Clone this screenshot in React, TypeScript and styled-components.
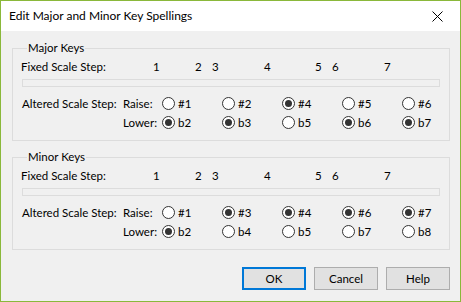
import React from 'react';
import styled, { createGlobalStyle } from 'styled-components';

const GlobalStyle = createGlobalStyle`
  html, body {
    margin: 0;
    padding: 0;
    background: #ffffff;
  }
  body {
    font-family: Lato, 'Noto Sans', 'Liberation Sans', sans-serif;
    font-size: 11.5px;
    color: #000000;
  }
`;

const Window = styled.div`
  width: 461px;
  height: 302px;
  box-sizing: border-box;
  border: 1px solid #8ab83a;
  display: flex;
  flex-direction: column;
  background: #f0f0f0;
`;

const TitleBar = styled.div`
  height: 30px;
  background: #ffffff;
  display: flex;
  align-items: center;
  justify-content: space-between;
  padding: 0 0 0 8px;
  flex-shrink: 0;
`;

const Title = styled.div`
  font-size: 12px;
  color: #000000;
  padding-bottom: 1px;
`;

const CloseButton = styled.div`
  width: 46px;
  height: 30px;
  display: flex;
  align-items: center;
  justify-content: center;
`;

const Client = styled.div`
  flex: 1;
  padding: 9px 10px 0 11px;
  display: flex;
  flex-direction: column;
`;

const GroupBox = styled.fieldset<{ $gap?: number }>`
  margin: 0 0 ${({ $gap }) => $gap ?? 0}px 0;
  padding: 0 8px 8px 8px;
  border: 1px solid #dcdcdc;
  min-width: 0;
`;

const Legend = styled.legend`
  padding: 0 1px;
  margin-left: 6px;
  line-height: 16px;
`;

const FixedRow = styled.div`
  position: relative;
  height: 16px;
  line-height: 16px;
  margin-top: 3px;
  white-space: nowrap;
`;

const StepNumber = styled.span`
  position: absolute;
  top: 0;
`;

const Track = styled.div`
  height: 8px;
  box-sizing: border-box;
  margin: 4px 1px 0 1px;
  border: 1px solid #dcdcdc;
  background: #f0f0f0;
`;

const AlteredGrid = styled.div`
  display: grid;
  grid-template-columns: 101px 39px repeat(5, 60px);
  grid-auto-rows: 19px;
  margin: 7px 0 0 1px;
  align-items: center;
`;

const RowLabel = styled.span`
  line-height: 16px;
  white-space: nowrap;
`;

const RadioItem = styled.label`
  display: flex;
  align-items: center;
  gap: 3px;
  line-height: 16px;
`;

const RadioCircle = styled.span<{ $checked: boolean }>`
  width: 13px;
  height: 13px;
  box-sizing: border-box;
  border: 1px solid #333333;
  border-radius: 50%;
  background: #ffffff;
  display: flex;
  align-items: center;
  justify-content: center;

  &::after {
    content: '';
    width: 7px;
    height: 7px;
    border-radius: 50%;
    background: ${({ $checked }) => ($checked ? '#333333' : 'transparent')};
  }
`;

const ButtonRow = styled.div`
  display: flex;
  justify-content: flex-end;
  gap: 8px;
  margin-top: 17px;
`;

const Button = styled.button<{ $focused?: boolean }>`
  width: 64px;
  height: 23px;
  box-sizing: border-box;
  font-family: inherit;
  font-size: 11.5px;
  color: #000000;
  background: #e1e1e1;
  border: ${({ $focused }) => ($focused ? '2px solid #0078d7' : '1px solid #adadad')};
  padding: 0;
  margin: 0;
`;

const stepOffsets = [132, 174, 191, 243, 294, 311, 363];

interface RadioOption {
  label: string;
  checked: boolean;
}

interface KeyGroup {
  title: string;
  raise: RadioOption[];
  lower: RadioOption[];
}

const groups: KeyGroup[] = [
  {
    title: 'Major Keys',
    raise: [
      { label: '#1', checked: false },
      { label: '#2', checked: false },
      { label: '#4', checked: true },
      { label: '#5', checked: false },
      { label: '#6', checked: false },
    ],
    lower: [
      { label: 'b2', checked: true },
      { label: 'b3', checked: true },
      { label: 'b5', checked: false },
      { label: 'b6', checked: true },
      { label: 'b7', checked: true },
    ],
  },
  {
    title: 'Minor Keys',
    raise: [
      { label: '#1', checked: false },
      { label: '#3', checked: true },
      { label: '#4', checked: true },
      { label: '#6', checked: true },
      { label: '#7', checked: true },
    ],
    lower: [
      { label: 'b2', checked: true },
      { label: 'b4', checked: false },
      { label: 'b5', checked: false },
      { label: 'b7', checked: false },
      { label: 'b8', checked: false },
    ],
  },
];

const Radio: React.FC<RadioOption> = ({ label, checked }) => (
  <RadioItem>
    <RadioCircle $checked={checked} />
    <span>{label}</span>
  </RadioItem>
);

const CloseIcon = () => (
  <svg width="11" height="11" viewBox="0 0 11 11">
    <path d="M0.5 0.5 L10.5 10.5 M10.5 0.5 L0.5 10.5" stroke="#000" strokeWidth="1" fill="none" />
  </svg>
);

const App: React.FC = () => {
  return (
    <>
      <GlobalStyle />
      <Window>
        <TitleBar>
          <Title>Edit Major and Minor Key Spellings</Title>
          <CloseButton>
            <CloseIcon />
          </CloseButton>
        </TitleBar>
        <Client>
          {groups.map((group, i) => (
            <GroupBox key={group.title} $gap={i === 0 ? 8 : 0}>
              <Legend>{group.title}</Legend>
              <FixedRow>
                <span>Fixed Scale Step:</span>
                {stepOffsets.map((left, n) => (
                  <StepNumber key={n} style={{ left }}>
                    {n + 1}
                  </StepNumber>
                ))}
              </FixedRow>
              <Track />
              <AlteredGrid>
                <RowLabel>Altered Scale Step:</RowLabel>
                <RowLabel>Raise:</RowLabel>
                {group.raise.map((opt) => (
                  <Radio key={opt.label} {...opt} />
                ))}
                <span />
                <RowLabel>Lower:</RowLabel>
                {group.lower.map((opt) => (
                  <Radio key={opt.label} {...opt} />
                ))}
              </AlteredGrid>
            </GroupBox>
          ))}
          <ButtonRow>
            <Button $focused>OK</Button>
            <Button>Cancel</Button>
            <Button>Help</Button>
          </ButtonRow>
        </Client>
      </Window>
    </>
  );
};

export default App;
